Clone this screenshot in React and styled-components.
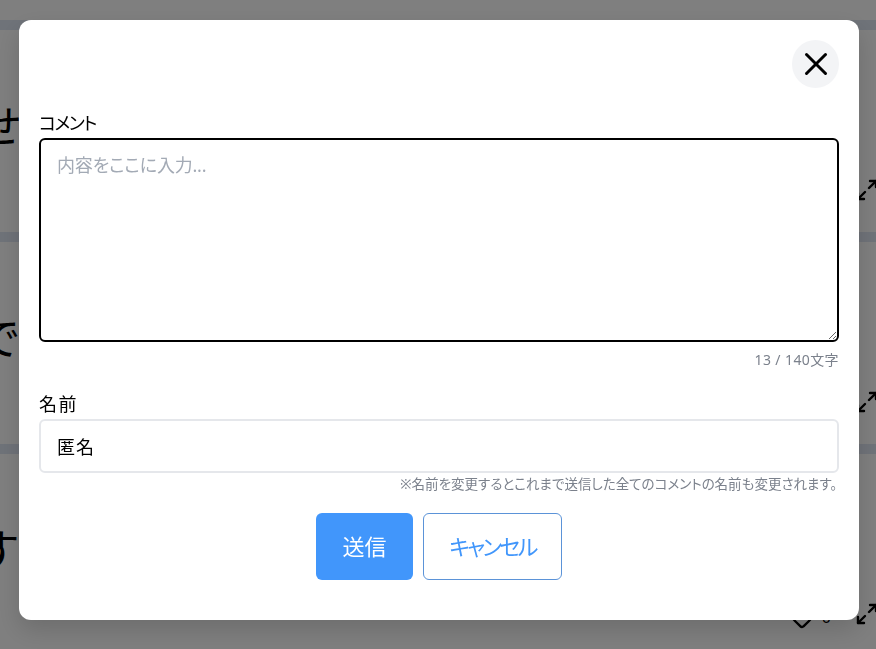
import styled, { createGlobalStyle } from "styled-components";
import { Heart, X } from "lucide-react";

const posts = [
  { id: 1, text: "せ", likes: 0 },
  { id: 2, text: "で", likes: 0 },
  { id: 3, text: "す", likes: 0 },
];

const ExpandIcon = () => (
  <svg width="24" height="24" viewBox="0 0 24 24" fill="none" stroke="currentColor" strokeWidth="2.4" strokeLinecap="round" strokeLinejoin="round">
    <path d="M15 3h6v6" />
    <path d="M21 3l-7 7" />
    <path d="M9 21H3v-6" />
    <path d="M3 21l7-7" />
  </svg>
);

const App = () => {
  return (
    <>
      <GlobalStyle />
      <Feed>
        {posts.map((post) => (
          <Card key={post.id}>
            <Strip />
            <Message>{post.text}</Message>
            <CardFooter>
              <LikeIcon>
                <Heart size={24} strokeWidth={2.4} />
              </LikeIcon>
              <Likes>{post.likes}</Likes>
              <ExpandIcon />
            </CardFooter>
          </Card>
        ))}
      </Feed>
      <Overlay>
        <Modal>
          <ModalHeader>
            <CloseButton type="button" aria-label="閉じる">
              <X size={38} strokeWidth={1.9} />
            </CloseButton>
          </ModalHeader>
          <Label htmlFor="comment" $tracking="-1.5px">コメント</Label>
          <TextArea id="comment" placeholder="内容をここに入力..." />
          <Count>13 / 140文字</Count>
          <Label htmlFor="name" $top="19px" $tracking="1.5px">名前</Label>
          <NameInput id="name" defaultValue="匿名" />
          <Hint>※名前を変更するとこれまで送信した全てのコメントの名前も変更されます。</Hint>
          <Actions>
            <SubmitButton type="button">送信</SubmitButton>
            <CancelButton type="button">キャンセル</CancelButton>
          </Actions>
        </Modal>
      </Overlay>
    </>
  );
};

export default App;

const GlobalStyle = createGlobalStyle`
  html, body {
    margin: 0;
    height: 100%;
    overflow: hidden;
    background: #fff;
  }
  body, textarea, input, button {
    font-family: "Noto Sans", "Noto Sans CJK JP", sans-serif;
    font-feature-settings: "palt";
  }
`;

const Feed = styled.div`
  padding-top: 20px;
  height: 649px;
  box-sizing: border-box;
  overflow: hidden;
`;

const Card = styled.article`
  height: 212px;
  display: flex;
  flex-direction: column;
  overflow: hidden;
`;

const Strip = styled.div`
  height: 10px;
  background: #dfe6f2;
  flex-shrink: 0;
`;

const Message = styled.p`
  flex: 1;
  margin: 0;
  padding-top: 66px;
  font-size: 44px;
  line-height: 60px;
  text-indent: -22px;
  color: #000;
`;

const CardFooter = styled.div`
  display: flex;
  align-items: center;
  justify-content: flex-end;
  height: 24px;
  margin: 0 -3px 30px 0;
  color: #000;
`;

const LikeIcon = styled.span`
  display: flex;
  margin-top: 8px;
`;

const Likes = styled.span`
  margin: 6px 24px 0 8px;
  font-size: 16px;
  line-height: 24px;
`;

const Overlay = styled.div`
  position: fixed;
  inset: 0;
  padding: 20px 0 0 19px;
  background: rgba(0, 0, 0, 0.5);
`;

const Modal = styled.div`
  width: 840px;
  height: 600px;
  box-sizing: border-box;
  padding: 20px;
  background: #fff;
  border-radius: 12px;
  box-shadow: 0 10px 25px rgba(0, 0, 0, 0.15);
  display: flex;
  flex-direction: column;
`;

const ModalHeader = styled.div`
  display: flex;
  justify-content: flex-end;
  height: 48px;
  margin-bottom: 20px;
`;

const CloseButton = styled.button`
  width: 47px;
  height: 48px;
  padding: 0;
  border: none;
  border-radius: 50%;
  background: #f3f4f6;
  color: #000;
  display: flex;
  align-items: center;
  justify-content: center;
`;

const Label = styled.label`
  font-size: 18px;
  line-height: 30px;
  color: #000;
  margin-top: ${({ $top }) => $top || "0"};
  letter-spacing: ${({ $tracking }) => $tracking};
`;

const TextArea = styled.textarea`
  display: block;
  width: 100%;
  height: 204px;
  box-sizing: border-box;
  padding: 11px 16px;
  border: 2px solid #000;
  border-radius: 6px;
  outline: none;
  font-size: 18px;
  line-height: 28px;
  letter-spacing: -0.2px;
  color: #000;
  background: #fff;

  &::placeholder {
    color: #a3aab5;
    opacity: 1;
  }
`;

const Count = styled.div`
  margin-top: 8px;
  font-size: 14px;
  line-height: 20px;
  letter-spacing: 0.4px;
  text-align: right;
  color: #7b818c;
`;

const NameInput = styled.input`
  display: block;
  width: 100%;
  height: 54px;
  box-sizing: border-box;
  padding: 0 16px;
  border: 2px solid #e5e7eb;
  border-radius: 6px;
  outline: none;
  font-size: 18px;
  letter-spacing: 1px;
  color: #000;
`;

const Hint = styled.div`
  margin-top: 1px;
  padding-right: 2px;
  font-size: 13.5px;
  line-height: 20px;
  text-align: right;
  color: #7b818c;
`;

const Actions = styled.div`
  display: flex;
  justify-content: center;
  gap: 10px;
  margin-top: 19px;
`;

const SubmitButton = styled.button`
  width: 97px;
  height: 67px;
  padding: 0 0 3px;
  border: none;
  border-radius: 6px;
  background: #4196fb;
  color: #fff;
  font-size: 22px;
`;

const CancelButton = styled.button`
  width: 139px;
  height: 67px;
  padding: 0 0 3px;
  border: 1px solid #5b93d8;
  border-radius: 6px;
  background: #fff;
  color: #4196fb;
  font-size: 22px;
  letter-spacing: -2.6px;
`;
